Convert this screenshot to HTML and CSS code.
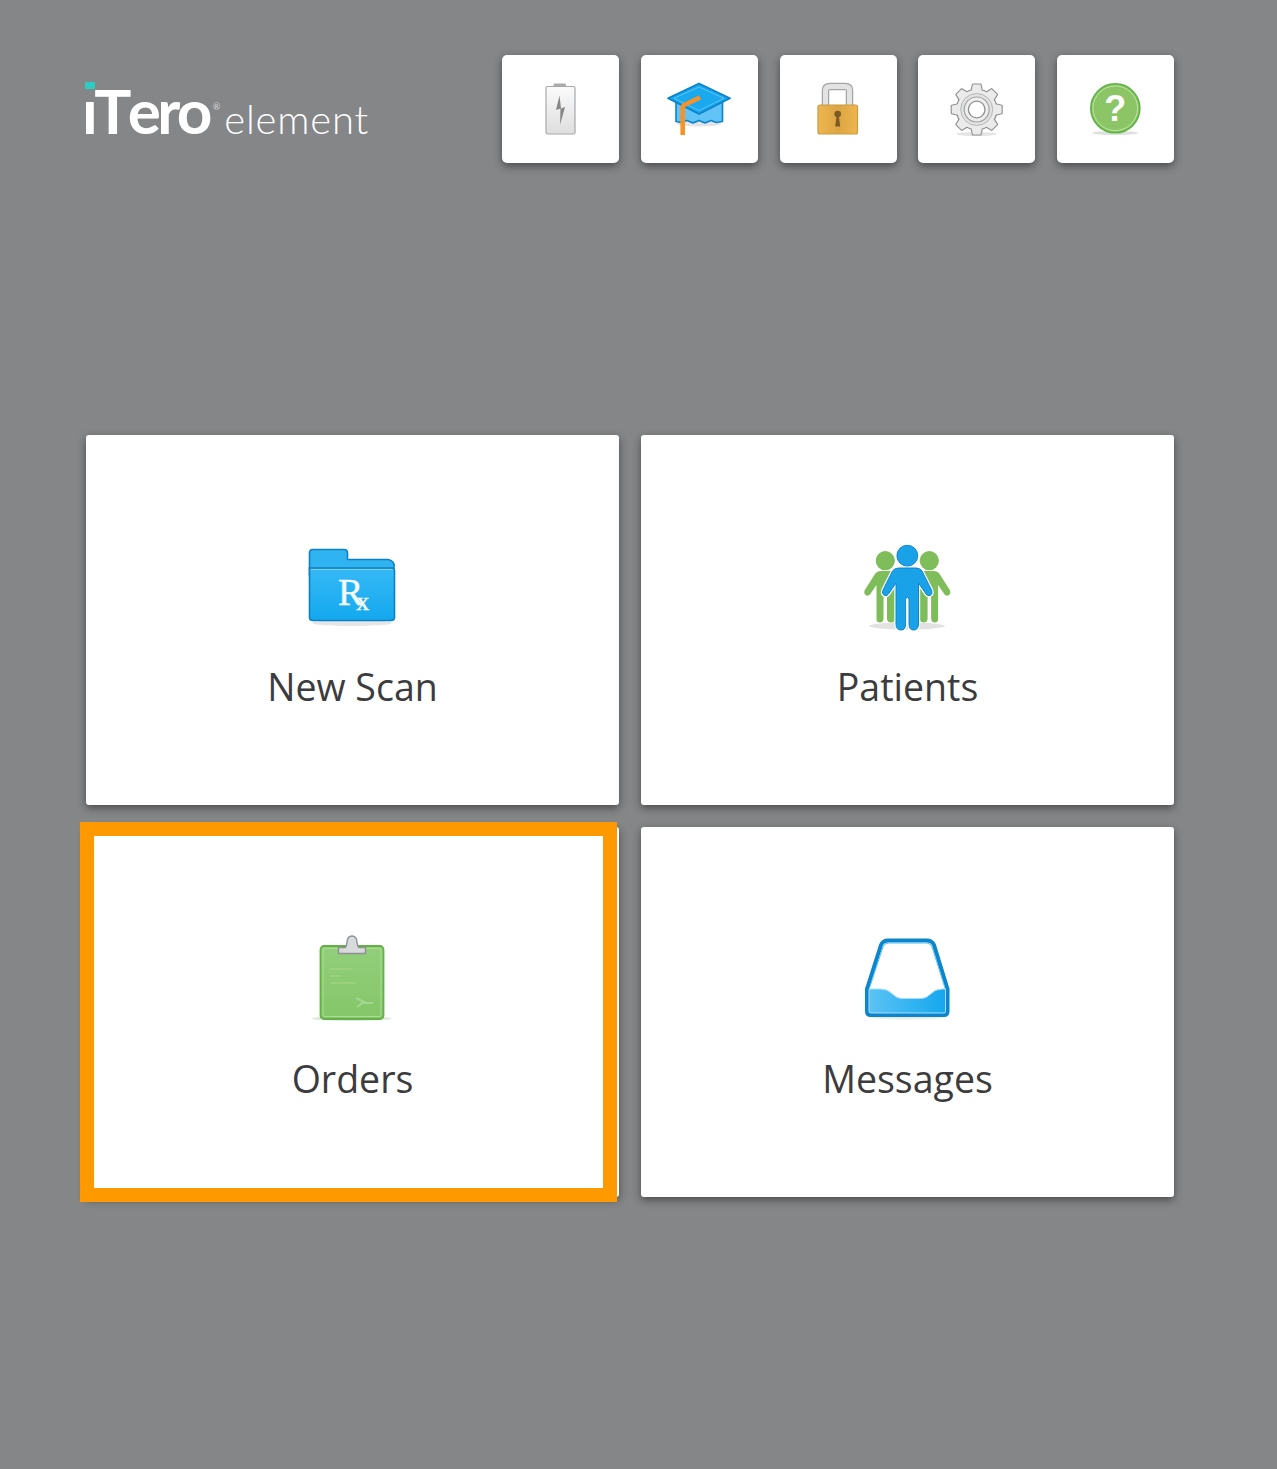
FILE: index.html
```html
<!DOCTYPE html>
<html lang="en">
<head>
    <meta charset="UTF-8">
    <title>iTero element</title>
    <link rel="stylesheet" href="styles.css">
</head>
<body>
    <svg class="defs" width="0" height="0">
        <defs>
            <linearGradient id="blueV" x1="0" y1="0" x2="0" y2="1">
                <stop offset="0" stop-color="#35b9f5"/>
                <stop offset="1" stop-color="#14a8ee"/>
            </linearGradient>
            <linearGradient id="trayFill" x1="0" y1="0" x2="1" y2="0">
                <stop offset="0" stop-color="#5cc3f5"/>
                <stop offset="1" stop-color="#14a7ee"/>
            </linearGradient>
            <linearGradient id="greenV" x1="0" y1="0" x2="0" y2="1">
                <stop offset="0" stop-color="#93cf7b"/>
                <stop offset="1" stop-color="#85c669"/>
            </linearGradient>
            <linearGradient id="battFill" x1="0" y1="0" x2="0" y2="1">
                <stop offset="0" stop-color="#fbfbfb"/>
                <stop offset="1" stop-color="#dededf"/>
            </linearGradient>
            <linearGradient id="lockFill" x1="0" y1="0" x2="1" y2="0">
                <stop offset="0" stop-color="#efb64e"/>
                <stop offset="0.5" stop-color="#dca545"/>
                <stop offset="1" stop-color="#efb64e"/>
            </linearGradient>
            <g id="gearShape">
                <circle r="21"/>
                <polygon points="-5.5,-20 -4,-26.5 4,-26.5 5.5,-20"/>
                <polygon points="-5.5,-20 -4,-26.5 4,-26.5 5.5,-20" transform="rotate(45)"/>
                <polygon points="-5.5,-20 -4,-26.5 4,-26.5 5.5,-20" transform="rotate(90)"/>
                <polygon points="-5.5,-20 -4,-26.5 4,-26.5 5.5,-20" transform="rotate(135)"/>
                <polygon points="-5.5,-20 -4,-26.5 4,-26.5 5.5,-20" transform="rotate(180)"/>
                <polygon points="-5.5,-20 -4,-26.5 4,-26.5 5.5,-20" transform="rotate(225)"/>
                <polygon points="-5.5,-20 -4,-26.5 4,-26.5 5.5,-20" transform="rotate(270)"/>
                <polygon points="-5.5,-20 -4,-26.5 4,-26.5 5.5,-20" transform="rotate(315)"/>
            </g>
            <path id="greenPerson" d="M24 36H40V80L38 84Q37.5 87.5 34 87.5Q30.5 87.5 30 84V63Q29.5 60.5 28.3 60.5Q27 60.5 26.5 63V84Q26 87.5 23 87.5Q19.5 87.5 19.5 84V50L13 59.5Q11 61.5 8.5 60Q6.5 58 7.5 55.5L18 39Q20 36 24 36Z"/>
            <path id="bluePerson" d="M42 33H59Q63 33 65 36L74.5 55Q76 59 73 60.5Q70.5 61.5 69 59L61.5 48V89Q61.5 95 56.5 95Q52 95 52 89V64Q52 62.5 50.3 62.5Q48.6 62.5 48.6 64V89Q48.6 95 44 95Q39 95 39 89V48L31.5 59Q30 61.5 27.5 60.5Q24.5 59 26 55L35.5 36Q37.5 33 42 33Z"/>
        </defs>
    </svg>

    <div class="page">
        <header class="top-bar">
            <div class="logo">
                <span class="logo-mark">iTero</span><span class="logo-reg">®</span><span class="logo-word">element</span>
                <span class="logo-dot"></span>
            </div>
            <nav class="tools">
                <button class="tool-btn" aria-label="Battery">
                    <svg width="71" height="72" viewBox="0 0 71 72">
                        <rect x="28.5" y="10.5" width="12.5" height="4" rx="1.2" fill="#a9aaab"/>
                        <rect x="21" y="13.5" width="29" height="47.5" rx="1.5" fill="url(#battFill)" stroke="#a6a7a8" stroke-width="1.2"/>
                        <polygon points="34.5,22.5 31,37 35.5,35.5 35,52 40,34 36,35.5" fill="#858688"/>
                    </svg>
                </button>
                <button class="tool-btn" aria-label="Training">
                    <svg width="71" height="72" viewBox="0 0 71 72">
                        <ellipse cx="35" cy="51" rx="22" ry="2.5" fill="#e4e4e4"/>
                        <path d="M12 29V48.5L17 49.5L23 47.5L29 50L35 47.5L41 50L47 47.5L52 49.5L58.5 48.5V29Z" fill="#62c3f6" stroke="#0a83cb" stroke-width="1.6" stroke-linejoin="round"/>
                        <polygon points="35,10.5 66,25.3 35,41 4,25.3" fill="#19a6ee" stroke="#0a83cb" stroke-width="1.8" stroke-linejoin="round"/>
                        <polygon points="35,14 60,25.3 35,37.5 10,25.3" fill="#1aa8ee" stroke="#5cc5f6" stroke-width="1"/>
                        <path d="M36 24.7L21 31.5Q18.7 32.7 18.7 35V62" fill="none" stroke="#f5922a" stroke-width="4.6" stroke-linejoin="round"/>
                    </svg>
                </button>
                <button class="tool-btn" aria-label="Lock">
                    <svg width="71" height="72" viewBox="0 0 71 72">
                        <path d="M22.5 33V17.5Q22.5 13.5 27 13.5H42Q46.5 13.5 46.5 17.5V33" fill="none" stroke="#a4a5a6" stroke-width="7.5"/>
                        <path d="M22.5 33V17.5Q22.5 13.5 27 13.5H42Q46.5 13.5 46.5 17.5V33" fill="none" stroke="#e3e3e4" stroke-width="5"/>
                        <rect x="15" y="32" width="39.5" height="29" rx="2" fill="url(#lockFill)" stroke="#c99b3c" stroke-width="1.2"/>
                        <circle cx="34.7" cy="41" r="3.3" fill="#7a5a25"/>
                        <polygon points="33.7,42 35.7,42 37.2,53.5 32.2,53.5" fill="#7a5a25"/>
                    </svg>
                </button>
                <button class="tool-btn" aria-label="Settings">
                    <svg width="71" height="72" viewBox="0 0 71 72">
                        <ellipse cx="35.5" cy="61" rx="20" ry="2" fill="#e4e4e4"/>
                        <g transform="translate(35.7 36.5)">
                            <use href="#gearShape" transform="scale(.94)" fill="#8f9092" stroke="#8f9092" stroke-width="2.4" stroke-linejoin="round"/>
                            <use href="#gearShape" transform="scale(.94)" fill="#ebebec"/>
                            <circle r="16" fill="#e3e3e4" stroke="#b4b5b6" stroke-width="1"/>
                            <circle r="12.5" fill="#ededee" stroke="#a1a2a3" stroke-width="1.2"/>
                            <circle r="8.3" fill="#fff" stroke="#8f9092" stroke-width="1.3"/>
                        </g>
                    </svg>
                </button>
                <button class="tool-btn" aria-label="Help">
                    <svg width="71" height="72" viewBox="0 0 71 72">
                        <ellipse cx="35" cy="60" rx="23" ry="2" fill="#dfe1de"/>
                        <circle cx="35.3" cy="35.3" r="24.5" fill="#8cc565" stroke="#5eb344" stroke-width="1.6"/>
                        <circle cx="35.3" cy="35.3" r="22.3" fill="none" stroke="#c0e2a8" stroke-width="1"/>
                        <text x="35.3" y="48" class="help-mark" text-anchor="middle">?</text>
                    </svg>
                </button>
            </nav>
        </header>

        <main class="tiles">
            <a class="tile">
                <svg width="101" height="100" viewBox="0 0 101 100">
                    <ellipse cx="50" cy="88" rx="40" ry="3" fill="#e6e6e6"/>
                    <path d="M7.5 18Q7.5 14.5 11 14.5H42Q45.5 14.5 45.5 18V24.5H86Q92.5 26 92 31V40H7.5Z" fill="#2fb3f1" stroke="#0d80c4" stroke-width="1.6"/>
                    <path d="M7.5 33H89.5Q92.5 33 92.5 36V82Q92.5 85.5 89 85.5H11Q7.5 85.5 7.5 82Z" fill="url(#blueV)" stroke="#0d80c4" stroke-width="1.6"/>
                    <path d="M9 34.5H91" fill="none" stroke="#7bd3f8" stroke-width="1"/>
                    <text x="36" y="70" class="rx"><tspan class="rx-r">R</tspan><tspan class="rx-x" dy="5">x</tspan></text>
                </svg>
                <span class="tile-label">New Scan</span>
            </a>
            <a class="tile">
                <svg width="101" height="100" viewBox="0 0 101 100">
                    <ellipse cx="50" cy="91" rx="38" ry="3.5" fill="#e2e2e2"/>
                    <g fill="#7ebd5a">
                        <circle cx="28.3" cy="25.7" r="9.6"/>
                        <circle cx="72.3" cy="25.7" r="9.6"/>
                        <use href="#greenPerson"/>
                        <use href="#greenPerson" transform="translate(100.6 0) scale(-1 1)"/>
                    </g>
                    <use href="#bluePerson" fill="#fff" stroke="#fff" stroke-width="3.4"/>
                    <circle cx="50.3" cy="20.7" r="11.6" fill="#fff"/>
                    <use href="#bluePerson" fill="#1aa2e8" stroke="#0d85cc" stroke-width="1"/>
                    <circle cx="50.3" cy="20.7" r="10.4" fill="#1aa2e8" stroke="#0d85cc" stroke-width="1"/>
                </svg>
                <span class="tile-label">Patients</span>
            </a>
            <a class="tile tile-selected">
                <svg width="101" height="100" viewBox="0 0 101 100">
                    <ellipse cx="49.7" cy="91.5" rx="40" ry="2.5" fill="#e4e4e4"/>
                    <rect x="18.5" y="19" width="63" height="73" rx="3.5" fill="url(#greenV)" stroke="#62b245" stroke-width="1.8"/>
                    <rect x="21" y="21.5" width="58" height="68" rx="2" fill="none" stroke="#addb96" stroke-width="1"/>
                    <g fill="#99d17f">
                        <rect x="28" y="41" width="22" height="2"/>
                        <rect x="28" y="48" width="10" height="2"/>
                        <rect x="28" y="55" width="26" height="2"/>
                    </g>
                    <path d="M54 71L62 75L55 80M59 76H71" fill="none" stroke="#a5d690" stroke-width="2"/>
                    <path d="M36.5 26.5V20.5H43Q44.5 20 45 15Q45.5 9 50 9Q54.5 9 55 15Q55.5 20 57 20.5H63.5V26.5Z" fill="#d9dadb" stroke="#8e8f91" stroke-width="1.4" stroke-linejoin="round"/>
                </svg>
                <span class="tile-label">Orders</span>
                <span class="focus-ring"></span>
            </a>
            <a class="tile">
                <svg width="101" height="100" viewBox="0 0 101 100">
                    <ellipse cx="50" cy="90.5" rx="36" ry="2" fill="#ececec"/>
                    <path d="M10 62L24 18Q26 13.5 31 13.5H70Q75 13.5 77 18L90.5 62V84Q90.5 88 87 88H13.5Q10 88 10 84Z" fill="#fff" stroke="#0b85cd" stroke-width="4" stroke-linejoin="round"/>
                    <path d="M12.5 61L26 20Q27.5 16 31.5 16H69.5Q73.5 16 75 20L88 61" fill="none" stroke="#57bff2" stroke-width="1"/>
                    <path d="M12 62H24Q31 62 36 67.5Q40 71.5 45 71.5H64Q69 71.5 73 67.5Q78 62 85 62H88.5V84.5Q88.5 86 87 86H14Q12 86 12 84.5Z" fill="url(#trayFill)" stroke="#a6def9" stroke-width="1"/>
                </svg>
                <span class="tile-label">Messages</span>
            </a>
        </main>
    </div>
</body>
</html>
```

FILE: styles.css
```css
body {
    margin: 0;
    background-color: #858688;
    font-family: 'Open Sans', sans-serif;
}

.defs {
    display: block;
    height: 0;
}

.page {
    box-sizing: border-box;
    height: 1469px;
    padding: 55px 103px 0 86px;
}

.top-bar {
    display: flex;
    justify-content: space-between;
    align-items: flex-start;
    height: 108px;
}

/* logo */
.logo {
    position: relative;
    display: flex;
    align-items: baseline;
    height: 108px;
    margin-left: -4px;
    color: #fff;
    font-family: 'Lato', sans-serif;
}

.logo-mark {
    margin-top: 13px;
    font-size: 62px;
    line-height: 84px;
    font-weight: 700;
    font-kerning: none;
    letter-spacing: -3.6px;
}

.logo-reg {
    position: relative;
    top: -24px;
    margin-left: 4px;
    font-size: 9px;
    color: #d6d6d7;
}

.logo-word {
    margin-left: 4px;
    font-size: 40px;
    font-weight: 300;
    letter-spacing: 0.8px;
}

/* cyan square replaces the dot of the i */
.logo-dot {
    position: absolute;
    left: 3px;
    top: 27px;
    width: 10px;
    height: 19px;
    background: linear-gradient(#2dcdc6 7px, #858688 7px);
}

/* top buttons */
.tools {
    display: flex;
    gap: 21.75px;
}

.tool-btn {
    display: flex;
    justify-content: center;
    align-items: center;
    width: 117px;
    height: 108px;
    padding: 0;
    border: none;
    border-radius: 5px;
    background-color: #fff;
    box-shadow: 0 3px 8px rgba(0, 0, 0, 0.45);
}

.help-mark {
    font-family: 'Liberation Sans', sans-serif;
    font-size: 36px;
    font-weight: 700;
    fill: #fff;
}

/* big tiles */
.tiles {
    display: grid;
    grid-template-columns: 533px 533px;
    grid-auto-rows: 370px;
    gap: 22px;
    margin-top: 272px;
}

.tile {
    position: relative;
    display: flex;
    flex-direction: column;
    align-items: center;
    padding-top: 100px;
    box-sizing: border-box;
    border-radius: 3px;
    background-color: #fff;
    box-shadow: 0 3px 8px rgba(0, 0, 0, 0.45);
}

.tile svg {
    display: block;
}

.tile-label {
    margin-top: 24px;
    font-size: 37.5px;
    line-height: 56px;
    color: #3c3c3e;
}

.rx {
    font-family: 'Liberation Serif', serif;
    fill: #f4fbff;
    stroke: #f4fbff;
    stroke-width: 0.4px;
}

.rx-r {
    font-size: 38px;
    letter-spacing: -7px;
}

.rx-x {
    font-size: 26px;
}

/* orange highlight over the Orders tile */
.focus-ring {
    position: absolute;
    left: -6px;
    top: -5px;
    box-sizing: border-box;
    width: 537px;
    height: 380px;
    border: 14px solid #ff9900;
}
```
